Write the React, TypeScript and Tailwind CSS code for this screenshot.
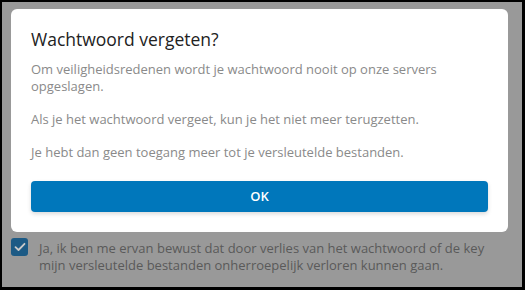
import React from "react";

export default function App() {
  return (
    <div
      className="w-[525px] h-[290px] bg-[#999999] border-l-2 border-t-2 border-r-[3px] border-b-[3px] border-black overflow-hidden"
      style={{ fontFamily: '"Open Sans", sans-serif' }}
    >
      <div className="pt-[7px] pl-[9px] pr-[11px]">
        <div className="w-[497px] bg-white rounded-[6px] px-[20px] pt-[18px] pb-[20px]">
          <h2 className="text-[17.5px] leading-[24px] text-[#222222] mb-[10px]">Wachtwoord vergeten?</h2>
          <p className="text-[13px] leading-[17px] text-[#8a8a8a] mb-[16px]">
            Om veiligheidsredenen wordt je wachtwoord nooit op onze servers opgeslagen.
          </p>
          <p className="text-[13px] leading-[17px] text-[#8a8a8a] mb-[16px]">
            Als je het wachtwoord vergeet, kun je het niet meer terugzetten.
          </p>
          <p className="text-[13px] leading-[17px] text-[#8a8a8a]">
            Je hebt dan geen toegang meer tot je versleutelde bestanden.
          </p>
          <button className="mt-[20px] w-full h-[31px] rounded-[4px] bg-[#0077bb] text-white text-[13px] font-semibold shadow-[0_2px_4px_rgba(0,0,0,0.15)]">
            OK
          </button>
        </div>
        <div className="mt-[6px] flex items-start gap-[11px]">
          <div className="w-[17px] h-[18px] shrink-0 rounded-[3px] bg-[#1c5a85] flex items-center justify-center">
            <svg width="12" height="10" viewBox="0 0 12 10" fill="none">
              <path d="M1.5 5.2 L4.5 8 L10.5 1.8" stroke="#c9c9c9" strokeWidth="1.8" strokeLinecap="round" strokeLinejoin="round" />
            </svg>
          </div>
          <p className="pt-[2px] text-[13px] leading-[17px] text-[#5a5a5a]">
            Ja, ik ben me ervan bewust dat door verlies van het wachtwoord of de key mijn versleutelde bestanden onherroepelijk verloren kunnen gaan.
          </p>
        </div>
      </div>
    </div>
  );
}
